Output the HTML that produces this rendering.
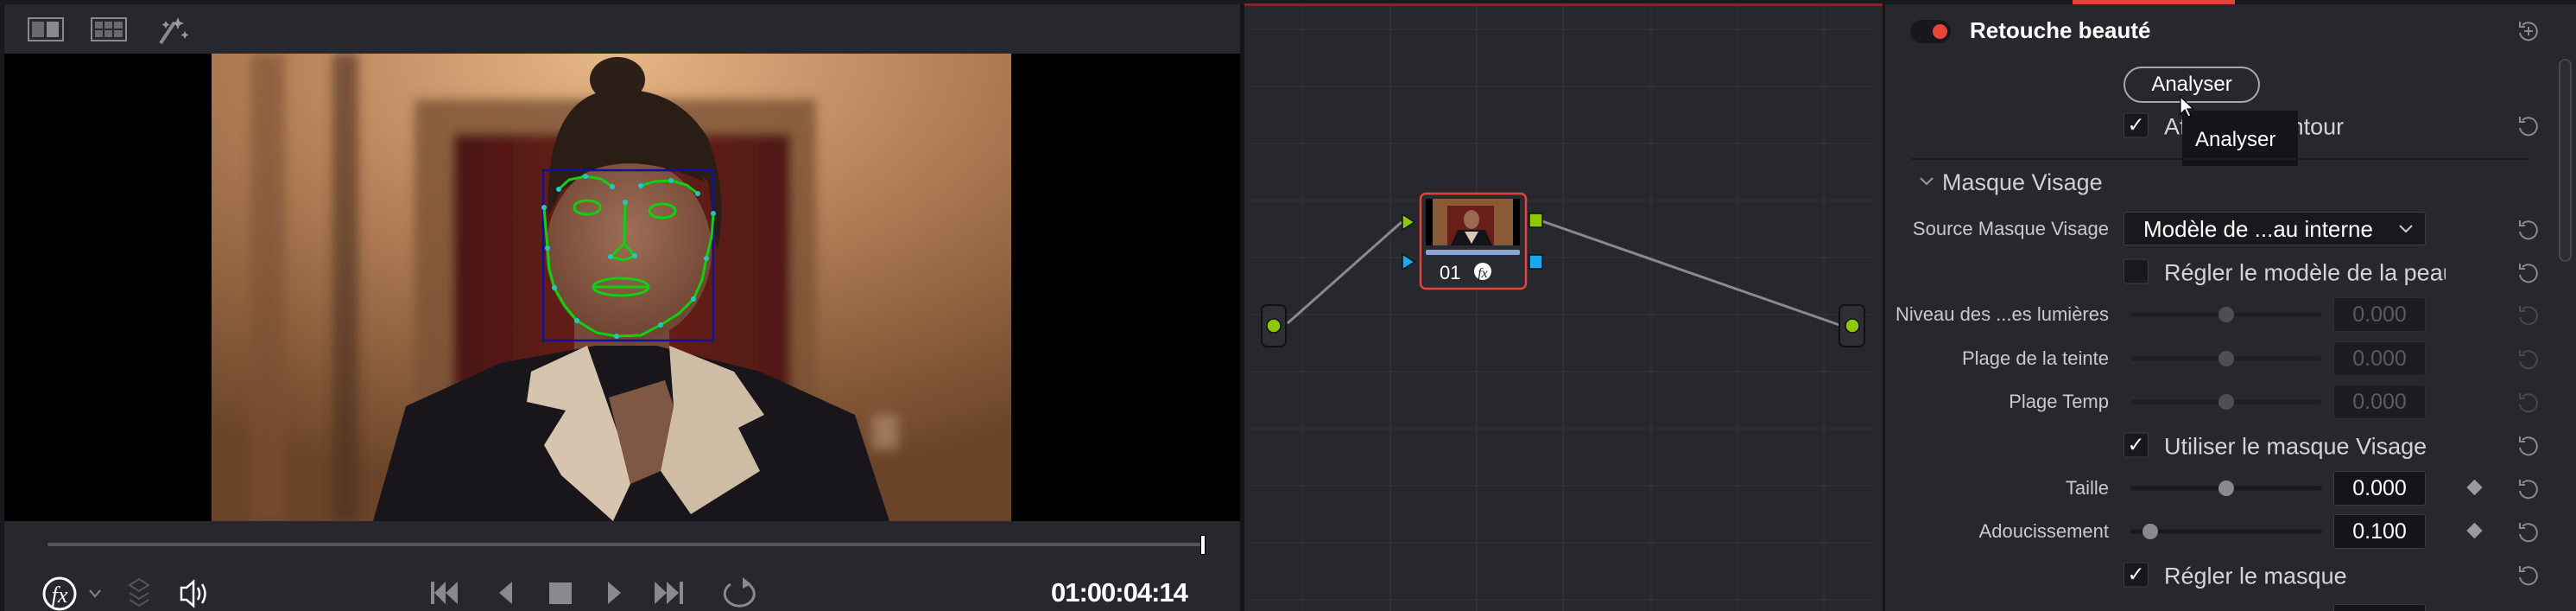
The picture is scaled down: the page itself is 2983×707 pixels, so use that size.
<!DOCTYPE html>
<html style="overflow:hidden;width:2983px;height:707px"><head><meta charset="utf-8"><style>
*{margin:0;padding:0;box-sizing:border-box}
body{width:2983px;height:707px;background:#1f2024;position:relative;overflow:hidden;font-family:"Liberation Sans",sans-serif;color:#d0d0d2}
.a{position:absolute}
.lbl{position:absolute;right:541px;font-size:22px;color:#c9c9cc;white-space:nowrap;transform:translateY(-50%)}
.txt{position:absolute;left:2506px;font-size:27px;color:#d4d4d6;white-space:nowrap;transform:translateY(-50%)}
.cb{position:absolute;left:2459px;width:29px;height:29px;background:#18191c;border:1px solid #3c3d42;border-radius:3px;transform:translateY(-50%);color:#fff;font-size:24px;line-height:27px;text-align:center}
.trk{position:absolute;left:2467px;width:222px;height:5px;background:#18191b;border-radius:3px;transform:translateY(-50%)}
.knob{position:absolute;width:18px;height:18px;border-radius:50%;background:#8a8a8c;transform:translate(-50%,-50%)}
.val{position:absolute;left:2702px;width:107px;height:40px;background:#141518;border:1px solid #3a3b40;border-radius:3px;transform:translateY(-50%);text-align:center;font-size:25px;line-height:38px;color:#fff}
.dim{color:#5a5b60;background:#1c1d21;border-color:#2e2f34}
.rst{position:absolute;left:2914px;width:28px;height:28px;transform:translateY(-50%)}
.dia{position:absolute;left:2859px;width:13px;height:13px;background:#9a9a9c;transform:translateY(-50%) rotate(45deg)}
</style></head><body>
<div class="a" style="left:0;top:0;width:2983px;height:5px;background:#18191c"></div>
<div class="a" style="left:0;top:5px;width:1440px;height:702px;background:#27282d"></div>
<div class="a" style="left:0;top:5px;width:5px;height:702px;background:#18191c"></div>
<div class="a" style="left:1436px;top:5px;width:5px;height:702px;background:#141517"></div>
<div class="a" style="left:5px;top:62px;width:1431px;height:541px;background:#000"></div>
<svg class="a" style="left:30px;top:18px" width="200" height="36" viewBox="0 0 200 36">
 <rect x="3" y="3" width="40" height="26" fill="none" stroke="#8a8a8e" stroke-width="2"/>
 <rect x="7" y="7" width="14" height="18" fill="#6a6a6e"/><rect x="24" y="7" width="14" height="18" fill="#8a8a8e"/>
 <rect x="76" y="3" width="40" height="26" fill="none" stroke="#8a8a8e" stroke-width="2"/>
 <g fill="#6a6a6e"><rect x="80" y="7" width="9" height="8"/><rect x="91" y="7" width="9" height="8"/><rect x="102" y="7" width="10" height="8"/><rect x="80" y="17" width="9" height="8"/><rect x="91" y="17" width="9" height="8"/><rect x="102" y="17" width="10" height="8"/></g>
 <path d="M156 32 L172 8" stroke="#8a8a8e" stroke-width="4"/>
 <path d="M176 2 l2 5 5 2 -5 2 -2 5 -2 -5 -5 -2 5 -2z M162 6 l1.5 3 3 1.5 -3 1.5 -1.5 3 -1.5 -3 -3 -1.5 3 -1.5z M184 18 l1.5 3 3 1.5 -3 1.5 -1.5 3 -1.5 -3 -3 -1.5 3 -1.5z" fill="#9a9a9e"/>
</svg>
<svg class="a" style="left:245px;top:62px" width="926" height="541" viewBox="245 62 926 541">
 <defs>
  <radialGradient id="bg" cx="0.5" cy="0.0" r="0.95"><stop offset="0" stop-color="#e6b787"/><stop offset="0.45" stop-color="#b58058"/><stop offset="1" stop-color="#6a4428"/></radialGradient>
  <linearGradient id="cur" x1="0" x2="1"><stop offset="0" stop-color="#4a1612"/><stop offset="0.5" stop-color="#6e201c"/><stop offset="1" stop-color="#4e1814"/></linearGradient>
  <radialGradient id="skin" cx="0.5" cy="0.4" r="0.6"><stop offset="0" stop-color="#9e6e56"/><stop offset="1" stop-color="#6e4432"/></radialGradient>
  <filter id="bl"><feGaussianBlur stdDeviation="6"/></filter>
 </defs>
 <rect x="245" y="62" width="926" height="541" fill="url(#bg)"/>
 <g filter="url(#bl)">
 <rect x="290" y="62" width="40" height="541" fill="#7a5030" opacity="0.6"/>
 <rect x="385" y="62" width="30" height="541" fill="#4a2e1c" opacity="0.6"/>
 <rect x="480" y="115" width="465" height="488" fill="#7a5236" opacity="0.8"/>
 <rect x="525" y="155" width="390" height="330" fill="url(#cur)"/>
 <rect x="1010" y="480" width="30" height="40" fill="#c8a586" opacity="0.5"/>
 </g>
 <rect x="665" y="350" width="110" height="90" fill="#74483a"/>
 <path d="M635 250 Q630 120 700 105 Q780 95 820 160 Q845 230 830 290 L820 210 Q760 150 650 220Z" fill="#2a1d16"/>
 <ellipse cx="715" cy="92" rx="32" ry="26" fill="#2c1f18"/>
 <ellipse cx="728" cy="290" rx="96" ry="106" fill="url(#skin)"/>
 <path d="M640 230 Q700 160 815 210 Q800 150 730 140 Q660 150 640 230Z" fill="#2a1d16"/>
 <path d="M432 603 L470 470 L580 420 L690 400 L760 400 L880 430 L990 480 L1030 603Z" fill="#19161b"/>
 <path d="M615 430 L680 400 L715 500 L730 560 L710 603 L650 550 L630 515 L655 475 L610 465Z" fill="#d6c4ae"/>
 <path d="M775 400 L850 430 L885 480 L855 495 L880 545 L800 595 L765 545 L780 470Z" fill="#cfbca5"/>
 <path d="M705 460 L770 440 L780 470 L765 545 L730 560Z" fill="#7e5844"/>
 <rect x="629" y="197" width="197" height="197" fill="none" stroke="#1010a0" stroke-width="2.5"/>
 <g fill="none" stroke="#10d010" stroke-width="3">
  <polyline points="630,240 632,264 634,287 636,311 642,333 654,354 668,371 691,385 714,389 742,388 765,376 786,363 803,346 813,324 818,299 824,274 826,247"/>
  <polyline points="647,219 659,208 678,204 696,207 709,216"/>
  <polyline points="742,215 758,210 777,209 795,214 808,224"/>
  <ellipse cx="680" cy="240" rx="15" ry="8"/><ellipse cx="767" cy="244" rx="15" ry="8"/>
  <polyline points="724,234 723,282 707,297 722,301 735,296 723,282"/>
  <ellipse cx="719" cy="332" rx="32" ry="10"/><line x1="688" y1="332" x2="751" y2="332"/>
 </g>
 <g fill="#20c8c0">
  <circle cx="630" cy="240" r="3"/><circle cx="634" cy="287" r="3"/><circle cx="642" cy="333" r="3"/><circle cx="668" cy="371" r="3"/><circle cx="714" cy="389" r="3"/><circle cx="765" cy="376" r="3"/><circle cx="803" cy="346" r="3"/><circle cx="818" cy="299" r="3"/><circle cx="826" cy="247" r="3"/>
  <circle cx="647" cy="219" r="3"/><circle cx="678" cy="204" r="3"/><circle cx="709" cy="216" r="3"/><circle cx="742" cy="215" r="3"/><circle cx="777" cy="209" r="3"/><circle cx="808" cy="224" r="3"/>
  <circle cx="724" cy="234" r="3"/><circle cx="707" cy="297" r="3"/><circle cx="735" cy="296" r="3"/>
 </g>
</svg>
<div class="a" style="left:55px;top:628px;width:1338px;height:4px;background:#55575d;border-radius:2px"></div>
<div class="a" style="left:1390px;top:619px;width:6px;height:23px;background:#fff;border:1px solid #000"></div>
<svg class="a" style="left:40px;top:665px" width="880" height="42" viewBox="40 665 880 42">
 <circle cx="69" cy="687" r="18" fill="none" stroke="#fff" stroke-width="3"/>
 <text x="69" y="697" text-anchor="middle" font-family="Liberation Serif" font-style="italic" font-size="26" fill="#fff">fx</text>
 <path d="M104 683 l6 7 6 -7" stroke="#888" stroke-width="2" fill="none"/>
 <path d="M150 677 l11 -7 11 7 -11 7z M150 686 l11 7 11 -7 M150 694 l11 7 11 -7" stroke="#555" stroke-width="2" fill="none"/>
 <path d="M210 680 h6 l8 -7 v28 l-8 -7 h-6z" fill="none" stroke="#fff" stroke-width="2.5"/>
 <path d="M229 680 q4 7 0 14 M234 676 q7 11 0 22" fill="none" stroke="#fff" stroke-width="2.5"/>
 <g fill="#8a8a8e">
  <rect x="499" y="673" width="4" height="26"/><path d="M503 686 l13 -13 v26z M516 686 l14 -13 v26z"/>
  <path d="M578 686 l15 -13 v26z"/>
  <rect x="636" y="674" width="26" height="25"/>
  <path d="M704 673 l15 13 -15 13z"/>
  <path d="M758 673 l14 13 -14 13z M772 673 l14 13 -14 13z"/><rect x="787" y="673" width="4" height="26"/>
 </g>
 <path d="M846 676 a17 14 0 1 0 22 1" fill="none" stroke="#8a8a8e" stroke-width="3"/><path d="M860 668 l10 8 -10 5z" fill="#8a8a8e"/>
</svg>
<div class="a" style="left:1217px;top:668px;font-size:31px;font-weight:bold;color:#fff;letter-spacing:-1px">01:00:04:14</div>

<div class="a" style="left:1441px;top:5px;width:741px;height:702px;background:#27282e"></div>
<div class="a" style="left:1441px;top:4px;width:741px;height:3px;background:#7a2a28"></div>
<svg class="a" style="left:1441px;top:0" width="741" height="707" viewBox="1441 0 741 707">
 <g stroke="#2f3137" stroke-width="1.5">
  <line x1="1508" y1="7" x2="1508" y2="707"/><line x1="1610" y1="7" x2="1610" y2="707"/><line x1="1710" y1="7" x2="1710" y2="707"/><line x1="1810" y1="7" x2="1810" y2="707"/><line x1="1912" y1="7" x2="1912" y2="707"/><line x1="2012" y1="7" x2="2012" y2="707"/><line x1="2112" y1="7" x2="2112" y2="707"/>
  <line x1="1448" y1="34" x2="2170" y2="34"/><line x1="1448" y1="100" x2="2170" y2="100"/><line x1="1448" y1="166" x2="2170" y2="166"/><line x1="1448" y1="232" x2="2170" y2="232"/><line x1="1448" y1="298" x2="2170" y2="298"/><line x1="1448" y1="364" x2="2170" y2="364"/><line x1="1448" y1="430" x2="2170" y2="430"/><line x1="1448" y1="496" x2="2170" y2="496"/><line x1="1448" y1="562" x2="2170" y2="562"/><line x1="1448" y1="628" x2="2170" y2="628"/><line x1="1448" y1="694" x2="2170" y2="694"/>
 </g>
 <line x1="1491" y1="374" x2="1623" y2="257" stroke="#8a8a8a" stroke-width="3"/>
 <line x1="1786" y1="256" x2="2130" y2="376" stroke="#8a8a8a" stroke-width="3"/>
 <rect x="1461" y="353" width="28" height="48" rx="6" fill="#2e2f35" stroke="#111" stroke-width="2"/>
 <ellipse cx="1475" cy="377" rx="8" ry="8" fill="#8dc800" stroke="#111" stroke-width="1.5"/>
 <rect x="2130" y="353" width="29" height="48" rx="6" fill="#2e2f35" stroke="#111" stroke-width="2"/>
 <ellipse cx="2145" cy="377" rx="8" ry="8" fill="#8dc800" stroke="#111" stroke-width="1.5"/>
 <rect x="1645" y="224" width="122" height="110" rx="6" fill="#2a2b30" stroke="#e0443a" stroke-width="2.5"/>
 <rect x="1651" y="230" width="109" height="54" fill="#8a5a34"/>
 <rect x="1651" y="230" width="8" height="54" fill="#000"/><rect x="1752" y="230" width="8" height="54" fill="#000"/>
 <rect x="1676" y="238" width="54" height="46" fill="#6a1e1a"/>
 <ellipse cx="1704" cy="254" rx="9" ry="11" fill="#9a6a50"/>
 <path d="M1680 284 l8 -18 h32 l8 18z" fill="#15131a"/>
 <path d="M1696 268 l8 14 8 -14z" fill="#d8c8b4"/>
 <rect x="1651" y="289" width="109" height="6" rx="2" fill="#8aa4d6"/>
 <text x="1667" y="323" font-family="Liberation Sans" font-size="22" fill="#fff">01</text>
 <circle cx="1717" cy="314" r="10" fill="#fff"/><text x="1717" y="321" text-anchor="middle" font-family="Liberation Serif" font-style="italic" font-size="16" fill="#222">fx</text>
 <path d="M1624 248 l14 9 -14 9z" fill="#8dc800" stroke="#111" stroke-width="1.5"/>
 <path d="M1624 294 l14 9 -14 9z" fill="#1aa8f0" stroke="#111" stroke-width="1.5"/>
 <rect x="1771" y="247" width="15" height="16" fill="#8dc800" stroke="#111" stroke-width="1.5"/>
 <rect x="1771" y="295" width="15" height="16" fill="#1aa8f0" stroke="#111" stroke-width="1.5"/>
</svg>
<div class="a" style="left:2180px;top:0;width:3px;height:707px;background:#151619"></div>

<div class="a" style="left:2183px;top:5px;width:800px;height:702px;background:#27282d;overflow:hidden">
 <div class="a" style="left:519px;top:694px;width:107px;height:40px;background:#141518;border:1px solid #3a3b40;border-radius:3px"></div>
</div>
<div class="a" style="left:2400px;top:0;width:188px;height:5px;background:#e0443a"></div>
<div class="a" style="left:2963px;top:68px;width:15px;height:235px;border:2px solid #46474d;border-radius:8px;background:#2c2d32"></div>
<div class="a" style="left:2212px;top:23px;width:47px;height:27px;border-radius:14px;background:#17181b"></div>
<div class="a" style="left:2238px;top:28px;width:17px;height:17px;border-radius:50%;background:#e8453a"></div>
<div class="a" style="left:2281px;top:20px;font-size:26px;font-weight:bold;color:#fff">Retouche beauté</div>
<div class="a" style="left:2459px;top:77px;width:158px;height:42px;border:2px solid #a8a8ac;border-radius:21px;text-align:center;font-size:24px;line-height:38px;color:#fff">Analyser</div>
<div class="cb" style="top:145px">✓</div>
<div class="txt" style="top:147px">Affiche le contour</div>
<div class="a" style="left:2527px;top:128px;width:134px;height:64px;background:#141518;font-size:24px;color:#fff;padding:20px 0 0 15px">Analyser</div>
<svg class="a" style="left:2522px;top:110px" width="20" height="30"><path d="M3 2 v20 l5 -5 4 8 3 -1 -4 -8 7 0z" fill="#fff" stroke="#000" stroke-width="1.2"/></svg>
<div class="a" style="left:2213px;top:183px;width:713px;height:2px;background:#1b1c20"></div>
<svg class="a" style="left:2222px;top:203px" width="18" height="14"><path d="M2 3 l7 7 7 -7" stroke="#9a9a9e" stroke-width="2" fill="none"/></svg>
<div class="a" style="left:2249px;top:196px;font-size:27px;color:#d0d0d2">Masque Visage</div>

<div class="lbl" style="top:265px">Source Masque Visage</div>
<div class="a" style="left:2459px;top:245px;width:350px;height:39px;background:#18191c;border:1px solid #3c3d42;border-radius:3px;font-size:26px;color:#fff;padding:4px 0 0 22px">Modèle de ...au interne</div>
<svg class="a" style="left:2777px;top:258px" width="18" height="14"><path d="M2 3 l7 7 7 -7" stroke="#ccc" stroke-width="2" fill="none"/></svg>

<div class="cb" style="top:314px"></div>
<div class="txt" style="top:316px;width:326px;overflow:hidden">Régler le modèle de la peau</div>

<div class="lbl" style="top:364px">Niveau des ...es lumières</div>
<div class="trk" style="top:364px;opacity:.6"></div><div class="knob" style="left:2578px;top:364px;background:#4e4f53"></div>
<div class="val dim" style="top:364px">0.000</div>
<div class="lbl" style="top:415px">Plage de la teinte</div>
<div class="trk" style="top:415px;opacity:.6"></div><div class="knob" style="left:2578px;top:415px;background:#4e4f53"></div>
<div class="val dim" style="top:415px">0.000</div>
<div class="lbl" style="top:465px">Plage Temp</div>
<div class="trk" style="top:465px;opacity:.6"></div><div class="knob" style="left:2578px;top:465px;background:#4e4f53"></div>
<div class="val dim" style="top:465px">0.000</div>

<div class="cb" style="top:515px">✓</div>
<div class="txt" style="top:517px">Utiliser le masque Visage</div>
<div class="lbl" style="top:565px">Taille</div>
<div class="trk" style="top:565px"></div><div class="knob" style="left:2578px;top:565px"></div>
<div class="val" style="top:565px">0.000</div><div class="dia" style="top:564px"></div>
<div class="lbl" style="top:615px">Adoucissement</div>
<div class="trk" style="top:615px"></div><div class="knob" style="left:2490px;top:615px"></div>
<div class="val" style="top:615px">0.100</div><div class="dia" style="top:614px"></div>
<div class="cb" style="top:665px">✓</div>
<div class="txt" style="top:667px">Régler le masque</div>

<svg class="rst" style="top:36px" viewBox="0 0 28 28"><path d="M7 7 A10 10 0 1 1 4 16" fill="none" stroke="#8a8a8e" stroke-width="2"/><path d="M4 3 v6 h6" fill="none" stroke="#8a8a8e" stroke-width="2"/><path d="M14 9 v10 M9 14 h10" stroke="#8a8a8e" stroke-width="2"/></svg>
<svg class="rst" style="top:146px" viewBox="0 0 28 28"><path d="M7 7 A10 10 0 1 1 4 16" fill="none" stroke="#8a8a8e" stroke-width="2"/><path d="M4 3 v6 h6" fill="none" stroke="#8a8a8e" stroke-width="2"/></svg>
<svg class="rst" style="top:266px" viewBox="0 0 28 28"><path d="M7 7 A10 10 0 1 1 4 16" fill="none" stroke="#8a8a8e" stroke-width="2"/><path d="M4 3 v6 h6" fill="none" stroke="#8a8a8e" stroke-width="2"/></svg>
<svg class="rst" style="top:316px" viewBox="0 0 28 28"><path d="M7 7 A10 10 0 1 1 4 16" fill="none" stroke="#8a8a8e" stroke-width="2"/><path d="M4 3 v6 h6" fill="none" stroke="#8a8a8e" stroke-width="2"/></svg>
<svg class="rst" style="top:365px" viewBox="0 0 28 28"><path d="M7 7 A10 10 0 1 1 4 16" fill="none" stroke="#48494e" stroke-width="2"/><path d="M4 3 v6 h6" fill="none" stroke="#48494e" stroke-width="2"/></svg>
<svg class="rst" style="top:416px" viewBox="0 0 28 28"><path d="M7 7 A10 10 0 1 1 4 16" fill="none" stroke="#48494e" stroke-width="2"/><path d="M4 3 v6 h6" fill="none" stroke="#48494e" stroke-width="2"/></svg>
<svg class="rst" style="top:466px" viewBox="0 0 28 28"><path d="M7 7 A10 10 0 1 1 4 16" fill="none" stroke="#48494e" stroke-width="2"/><path d="M4 3 v6 h6" fill="none" stroke="#48494e" stroke-width="2"/></svg>
<svg class="rst" style="top:516px" viewBox="0 0 28 28"><path d="M7 7 A10 10 0 1 1 4 16" fill="none" stroke="#8a8a8e" stroke-width="2"/><path d="M4 3 v6 h6" fill="none" stroke="#8a8a8e" stroke-width="2"/></svg>
<svg class="rst" style="top:566px" viewBox="0 0 28 28"><path d="M7 7 A10 10 0 1 1 4 16" fill="none" stroke="#8a8a8e" stroke-width="2"/><path d="M4 3 v6 h6" fill="none" stroke="#8a8a8e" stroke-width="2"/></svg>
<svg class="rst" style="top:616px" viewBox="0 0 28 28"><path d="M7 7 A10 10 0 1 1 4 16" fill="none" stroke="#8a8a8e" stroke-width="2"/><path d="M4 3 v6 h6" fill="none" stroke="#8a8a8e" stroke-width="2"/></svg>
<svg class="rst" style="top:666px" viewBox="0 0 28 28"><path d="M7 7 A10 10 0 1 1 4 16" fill="none" stroke="#8a8a8e" stroke-width="2"/><path d="M4 3 v6 h6" fill="none" stroke="#8a8a8e" stroke-width="2"/></svg>
</body></html>
